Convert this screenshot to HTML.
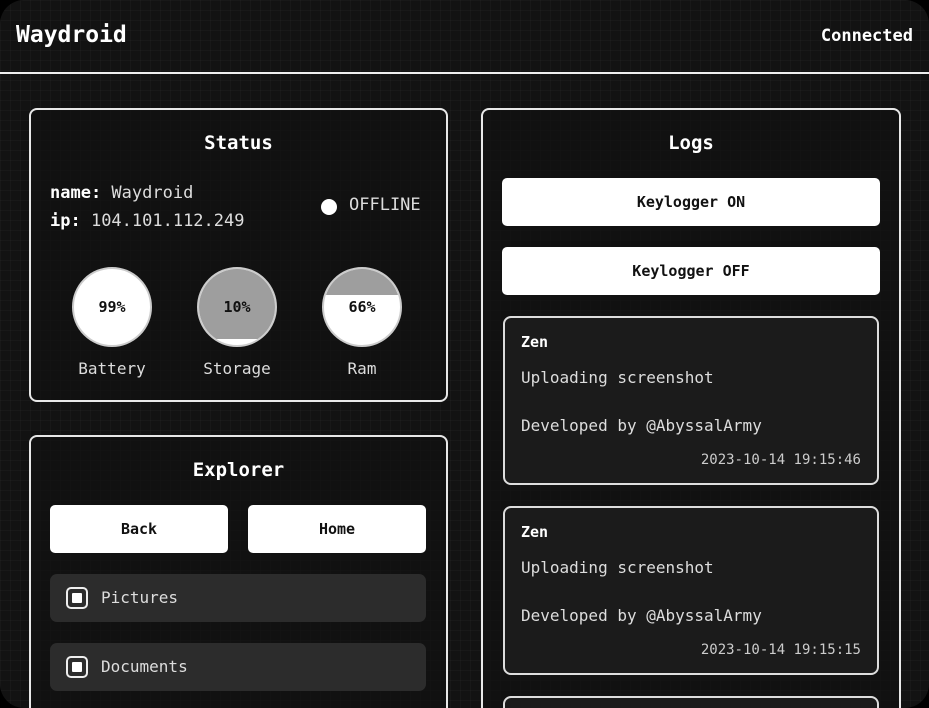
<!DOCTYPE html>
<html><head><style>
*{box-sizing:border-box;margin:0;padding:0}
html,body{width:929px;height:708px;overflow:hidden}
body{background:#000;font-family:"DejaVu Sans Mono","Liberation Mono",monospace;color:#ddd}
.app{position:absolute;left:0;top:0;width:929px;height:708px;background-color:#121212;border-radius:24px;overflow:hidden;
background-image:linear-gradient(rgba(255,255,255,.025) 1px,transparent 1px),linear-gradient(90deg,rgba(255,255,255,.025) 1px,transparent 1px);background-size:10px 10px}
.hdr{position:absolute;left:0;top:0;width:929px;height:74px;border-bottom:2px solid #eee}
.hdr .t{position:absolute;left:16px;top:22px;font-size:23px;font-weight:bold;color:#fff}
.hdr .c{position:absolute;right:16px;top:26px;font-size:17px;font-weight:bold;color:#fff}
.panel{position:absolute;border:2px solid #e8e8e8;border-radius:8px;background:rgba(18,18,18,.75)}
.ptitle{position:absolute;left:0;right:0;text-align:center;font-size:19px;font-weight:bold;color:#fff}
.btn{position:absolute;background:#fff;border-radius:5px;color:#111;font-weight:bold;font-size:15px;text-align:center}
.circ{position:absolute;width:80px;height:80px;border-radius:50%;border:2px solid #ccc;overflow:hidden;background:#fff}
.circ .f{position:absolute;left:0;right:0;top:0;background:#9e9e9e}
.circ span{position:absolute;left:0;right:0;top:29px;text-align:center;font-weight:bold;font-size:15px;color:#111}
.lbl{position:absolute;width:100px;text-align:center;font-size:16px;color:#ddd}
.card{position:absolute;left:20px;width:376px;height:169px;border:2px solid #ddd;border-radius:8px;background:rgba(30,30,30,.8)}
.card .z{position:absolute;left:16px;top:15px;font-weight:bold;font-size:15px;color:#fff}
.card .u{position:absolute;left:16px;top:50px;font-size:16px}
.card .d{position:absolute;left:16px;top:98px;font-size:16px}
.card .ts{position:absolute;right:16px;top:134px;font-size:14px;color:#ccc}
.item{position:absolute;left:20px;width:376px;height:48px;background:#2c2c2c;border-radius:7px}
.item .cb{position:absolute;left:16px;top:13px;width:22px;height:22px;border:2px solid #eee;border-radius:5px}
.item .cb:after{content:"";position:absolute;left:4px;top:4px;width:10px;height:10px;background:#fff;border-radius:1px}
.item .n{position:absolute;left:51px;top:14px;font-size:16px;color:#ddd}
</style></head><body>
<div class="app">
<div class="hdr"><div class="t">Waydroid</div><div class="c">Connected</div></div>

<div class="panel" style="left:29px;top:108px;width:419px;height:294px">
<div class="ptitle" style="top:22px">Status</div>
<div style="position:absolute;left:19px;top:69px;font-size:17px;line-height:28px;color:#ddd"><b style="color:#fff">name:</b> Waydroid<br><b style="color:#fff">ip:</b> 104.101.112.249</div>
<div style="position:absolute;left:290px;top:89px;width:16px;height:16px;border-radius:50%;background:#fff"></div>
<div style="position:absolute;left:318px;top:85px;font-size:17px;color:#ddd">OFFLINE</div>
<div class="circ" style="left:41px;top:157px"><span>99%</span></div>
<div class="circ" style="left:166px;top:157px"><div class="f" style="height:70px"></div><span>10%</span></div>
<div class="circ" style="left:291px;top:157px"><div class="f" style="height:26px"></div><span>66%</span></div>
<div class="lbl" style="left:31px;top:249px">Battery</div>
<div class="lbl" style="left:156px;top:249px">Storage</div>
<div class="lbl" style="left:281px;top:249px">Ram</div>
</div>

<div class="panel" style="left:29px;top:435px;width:419px;height:300px">
<div class="ptitle" style="top:22px">Explorer</div>
<div class="btn" style="left:19px;top:68px;width:178px;height:48px;line-height:48px">Back</div>
<div class="btn" style="left:217px;top:68px;width:178px;height:48px;line-height:48px">Home</div>
<div class="item" style="left:19px;top:137px"><div class="cb"></div><div class="n">Pictures</div></div>
<div class="item" style="left:19px;top:206px"><div class="cb"></div><div class="n">Documents</div></div>
</div>

<div class="panel" style="left:481px;top:108px;width:420px;height:640px">
<div class="ptitle" style="top:22px">Logs</div>
<div class="btn" style="left:19px;top:68px;width:378px;height:48px;line-height:48px">Keylogger ON</div>
<div class="btn" style="left:19px;top:137px;width:378px;height:48px;line-height:48px">Keylogger OFF</div>
<div class="card" style="top:206px"><div class="z">Zen</div><div class="u">Uploading screenshot</div><div class="d">Developed by @AbyssalArmy</div><div class="ts">2023-10-14 19:15:46</div></div>
<div class="card" style="top:396px"><div class="z">Zen</div><div class="u">Uploading screenshot</div><div class="d">Developed by @AbyssalArmy</div><div class="ts">2023-10-14 19:15:15</div></div>
<div class="card" style="top:586px"></div>
</div>
</div>
</body></html>
